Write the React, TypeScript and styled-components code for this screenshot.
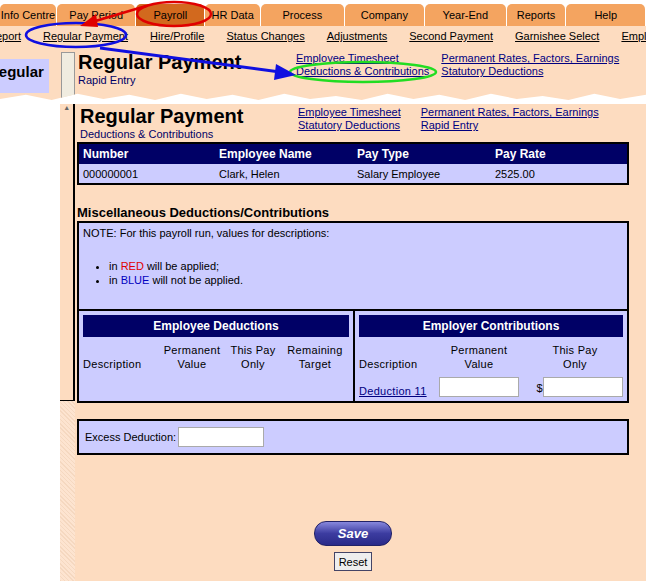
import React from 'react';
import styled, { createGlobalStyle } from 'styled-components';

const Global = createGlobalStyle`
  body { margin: 0; background: #fff; font-family: "Liberation Sans", Arial, sans-serif; font-size: 11px; }
`;

const Page = styled.div`
  position: relative;
  width: 646px;
  height: 581px;
  overflow: hidden;
  background: #fff;
`;

const Top = styled.div`
  background: #fddcc0;
  height: 102px;
  clip-path: polygon(0 0, 100% 0, 100% 93%, 96% 97%, 92% 92%, 88% 98%, 84% 94%, 80% 97%, 76% 92%, 72% 98%, 68% 93%, 64% 97%, 60% 92%, 56% 98%, 52% 94%, 48% 97%, 44% 92%, 40% 98%, 36% 93%, 32% 97%, 28% 92%, 24% 98%, 20% 93%, 16% 97%, 12% 92%, 8% 98%, 4% 93%, 0 97%);
`;

const Tabs = styled.div`
  display: flex;
  height: 26px;
  align-items: flex-end;
  background: #fff;
`;

const Tab = styled.div<{ $w: number; $active?: boolean }>`
  width: ${({ $w }) => $w}px;
  height: 22px;
  box-sizing: border-box;
  margin-right: 1px;
  background: ${({ $active }) => ($active ? '#d2691e' : '#f4a460')};
  border-radius: 5px 5px 0 0;
  display: flex;
  align-items: center;
  justify-content: center;
  font-size: 11px;
  color: #000;
`;

const SubNav = styled.div`
  display: flex;
  gap: 22px;
  height: 20px;
  align-items: center;
  margin-left: -12px;
  white-space: nowrap;
  a { color: #000; font-size: 11px; }
`;

const TopRow = styled.div`
  display: flex;
  align-items: flex-start;
  margin-top: 6px;
`;

const SideStub = styled.div`
  width: 49px;
  height: 34px;
  background: #ccccff;
  font-weight: bold;
  font-size: 15px;
  margin-top: 7px;
  overflow: hidden;
  text-indent: -12px;
  line-height: 26px;
  white-space: nowrap;
`;

const MiniScroll = styled.div`
  width: 14px;
  height: 48px;
  margin-left: 12px;
  background: #f0ece0;
  border: 1px solid #999;
  box-sizing: border-box;
`;

const TitleBlock = styled.div<{ $w: number }>`
  margin-left: 3px;
  width: ${({ $w }) => $w}px;
`;

const Title = styled.div`
  font-size: 20px;
  font-weight: bold;
  line-height: 20px;
  color: #000;
`;

const SubTitle = styled.div`
  color: #000066;
  font-size: 11px;
  margin-top: 2px;
`;

const LinkGrid = styled.div<{ $gap: number }>`
  display: grid;
  grid-template-columns: auto auto;
  column-gap: ${({ $gap }) => $gap}px;
  row-gap: 1px;
  a { color: #000080; font-size: 11px; white-space: nowrap; }
`;

const Main = styled.div`
  display: flex;
  margin-top: 2px;
  height: 477px;
`;

const Gutter = styled.div`
  width: 62px;
`;

const Strip = styled.div`
  width: 15px;
  background: #fddcc0;
  display: flex;
  flex-direction: column;
`;

const StripScroll = styled.div`
  height: 296px;
  background: #fddcc0;
  border-right: 2px solid #000;
  border-bottom: 1px solid #000;
  display: flex;
  justify-content: center;
  font-size: 7px;
  color: #666;
`;

const StripDots = styled.div`
  flex: 1;
  background: repeating-linear-gradient(45deg, #f5d8c0 0 1px, #fde4d0 1px 3px);
`;

const Content = styled.div`
  flex: 1;
  background: #fddcc0;
  padding: 2px 17px 0 2px;
`;

const Head = styled.div`
  display: flex;
  align-items: flex-start;
`;

const Box = styled.div`
  border: 2px solid #000;
  background: #ccccff;
`;

const EmpTable = styled.table`
  width: 100%;
  border-collapse: collapse;
  border: 2px solid #000;
  margin-top: 2px;
  background: #ccccff;
  th { background: #000066; color: #fff; text-align: left; font-size: 12px; padding: 3px 4px; height: 14px; }
  td { font-size: 11px; padding: 3px 4px; height: 13px; }
`;

const Section = styled.div`
  font-weight: bold;
  font-size: 13px;
  margin-top: 20px;
  margin-bottom: 1px;
`;

const Note = styled(Box)`
  padding: 4px;
  box-sizing: border-box;
  height: 90px;
  ul { margin: 20px 0 0; padding-left: 26px; }
  li { line-height: 14px; }
`;

const Split = styled.div`
  display: flex;
  border: 2px solid #000;
  border-top: none;
  height: 92px;
  box-sizing: border-box;
  background: #ccccff;
`;

const Panel = styled.div<{ $w: number }>`
  width: ${({ $w }) => $w}px;
  padding: 4px;
  box-sizing: border-box;
  & + & { border-left: 2px solid #000; }
`;

const PanelHead = styled.div`
  background: #000066;
  color: #fff;
  font-weight: bold;
  font-size: 12px;
  text-align: center;
  height: 22px;
  line-height: 22px;
`;

const ColGrid = styled.div<{ $cols: string }>`
  display: grid;
  grid-template-columns: ${({ $cols }) => $cols};
  align-items: end;
  font-size: 11px;
  margin-top: 6px;
  row-gap: 6px;
  letter-spacing: 0.3px;
`;

const ColHead = styled.div`
  text-align: center;
  line-height: 14px;
  &:first-child { text-align: left; }
`;

const Input = styled.input<{ $w: number }>`
  width: ${({ $w }) => $w}px;
  height: 20px;
  box-sizing: border-box;
  border: 1px solid #aaa;
  background: #fff;
`;

const Excess = styled(Box)`
  margin-top: 16px;
  height: 36px;
  box-sizing: border-box;
  display: flex;
  align-items: center;
  padding-left: 6px;
  gap: 2px;
`;

const Buttons = styled.div`
  display: flex;
  flex-direction: column;
  align-items: center;
  margin-top: 66px;
  gap: 6px;
`;

const Save = styled.button`
  width: 78px;
  height: 25px;
  border-radius: 12px;
  border: 1px solid #222266;
  background: linear-gradient(#8888dd, #3c3ca0 50%, #2a2a88);
  color: #fff;
  font-style: italic;
  font-weight: bold;
  font-size: 13px;
  font-family: "Liberation Sans", Arial, sans-serif;
`;

const Reset = styled.button`
  height: 19px;
  padding: 0 4px;
  font-size: 11px;
  font-family: "Liberation Sans", Arial, sans-serif;
  background: #eee;
  border: 1px solid #446;
`;

const Overlay = styled.svg`
  position: absolute;
  left: 0;
  top: 0;
  pointer-events: none;
`;

const Red = styled.span`color: #e00000;`;
const Blue = styled.span`color: #0000c0;`;

export default function App() {
  return (
    <Page>
      <Global />
      <Top>
        <Tabs>
          <Tab $w={57}>Info Centre</Tab>
          <Tab $w={80}>Pay Period</Tab>
          <Tab $w={69} $active>Payroll</Tab>
          <Tab $w={56}>HR Data</Tab>
          <Tab $w={84}>Process</Tab>
          <Tab $w={81}>Company</Tab>
          <Tab $w={82}>Year-End</Tab>
          <Tab $w={60}>Reports</Tab>
          <Tab $w={80}>Help</Tab>
        </Tabs>
        <SubNav>
          <a href="#">Report</a>
          <a href="#">Regular Payment</a>
          <a href="#">Hire/Profile</a>
          <a href="#">Status Changes</a>
          <a href="#">Adjustments</a>
          <a href="#">Second Payment</a>
          <a href="#">Garnishee Select</a>
          <a href="#">Employee</a>
        </SubNav>
        <TopRow>
          <SideStub>Regular</SideStub>
          <MiniScroll />
          <TitleBlock $w={218}>
            <Title>Regular Payment</Title>
            <SubTitle>Rapid Entry</SubTitle>
          </TitleBlock>
          <LinkGrid $gap={12}>
            <a href="#">Employee Timesheet</a>
            <a href="#">Permanent Rates, Factors, Earnings</a>
            <a href="#">Deductions &amp; Contributions</a>
            <a href="#">Statutory Deductions</a>
          </LinkGrid>
        </TopRow>
      </Top>
      <Main>
        <Gutter />
        <Strip>
          <StripScroll>▲</StripScroll>
          <StripDots />
        </Strip>
        <Content>
          <Head>
            <TitleBlock $w={218}>
              <Title>Regular Payment</Title>
              <SubTitle>Deductions &amp; Contributions</SubTitle>
            </TitleBlock>
            <LinkGrid $gap={20}>
              <a href="#">Employee Timesheet</a>
              <a href="#">Permanent Rates, Factors, Earnings</a>
              <a href="#">Statutory Deductions</a>
              <a href="#">Rapid Entry</a>
            </LinkGrid>
          </Head>
          <EmpTable>
            <thead>
              <tr><th style={{ width: 128 }}>Number</th><th style={{ width: 130 }}>Employee Name</th><th style={{ width: 130 }}>Pay Type</th><th>Pay Rate</th></tr>
            </thead>
            <tbody>
              <tr><td>000000001</td><td>Clark, Helen</td><td>Salary Employee</td><td>2525.00</td></tr>
            </tbody>
          </EmpTable>
          <Section>Miscellaneous Deductions/Contributions</Section>
          <Note>
            NOTE: For this payroll run, values for descriptions:
            <ul>
              <li>in <Red>RED</Red> will be applied;</li>
              <li>in <Blue>BLUE</Blue> will not be applied.</li>
            </ul>
          </Note>
          <Split>
            <Panel $w={274}>
              <PanelHead>Employee Deductions</PanelHead>
              <ColGrid $cols="76px 66px 56px 1fr">
                <ColHead>Description</ColHead>
                <ColHead>Permanent<br />Value</ColHead>
                <ColHead>This Pay<br />Only</ColHead>
                <ColHead>Remaining<br />Target</ColHead>
              </ColGrid>
            </Panel>
            <Panel $w={274}>
              <PanelHead>Employer Contributions</PanelHead>
              <ColGrid $cols="72px 96px 1fr">
                <ColHead>Description</ColHead>
                <ColHead>Permanent<br />Value</ColHead>
                <ColHead>This Pay<br />Only</ColHead>
                <a href="#" style={{ color: '#000080' }}>Deduction 11</a>
                <div style={{ textAlign: 'center' }}><Input $w={80} /></div>
                <div style={{ textAlign: 'right' }}>$<Input $w={80} /></div>
              </ColGrid>
            </Panel>
          </Split>
          <Excess>
            Excess Deduction: <Input $w={86} />
          </Excess>
          <Buttons>
            <Save>Save</Save>
            <Reset>Reset</Reset>
          </Buttons>
        </Content>
      </Main>
      <Overlay width="646" height="581" viewBox="0 0 646 581">
        <ellipse cx="174" cy="14" rx="37" ry="12" fill="none" stroke="#e00000" strokeWidth="2.5" />
        <ellipse cx="76" cy="35" rx="50" ry="12" fill="none" stroke="#1010e0" strokeWidth="2.5" />
        <ellipse cx="363" cy="72" rx="73" ry="10" fill="none" stroke="#22dd22" strokeWidth="2.5" />
        <line x1="146" y1="6" x2="92" y2="22" stroke="#e00000" strokeWidth="2.5" />
        <polygon points="80,26 96,14 98,27" fill="#e00000" />
        <line x1="100" y1="48" x2="280" y2="72" stroke="#1010e0" strokeWidth="3" />
        <polygon points="296,75 276,64 274,80" fill="#1010e0" />
      </Overlay>
    </Page>
  );
}
